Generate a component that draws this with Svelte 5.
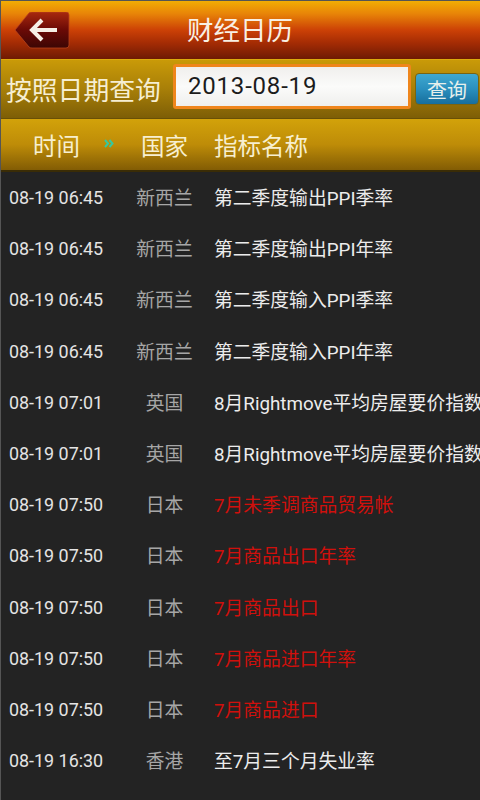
<script lang="ts">
  const rows = [
    { time: '08-19 06:45', country: '新西兰', name: '第二季度输出PPI季率' },
    { time: '08-19 06:45', country: '新西兰', name: '第二季度输出PPI年率' },
    { time: '08-19 06:45', country: '新西兰', name: '第二季度输入PPI季率' },
    { time: '08-19 06:45', country: '新西兰', name: '第二季度输入PPI年率' },
    { time: '08-19 07:01', country: '英国', name: '8月Rightmove平均房屋要价指数' },
    { time: '08-19 07:01', country: '英国', name: '8月Rightmove平均房屋要价指数' },
    { time: '08-19 07:50', country: '日本', name: '7月未季调商品贸易帐', hot: true },
    { time: '08-19 07:50', country: '日本', name: '7月商品出口年率', hot: true },
    { time: '08-19 07:50', country: '日本', name: '7月商品出口', hot: true },
    { time: '08-19 07:50', country: '日本', name: '7月商品进口年率', hot: true },
    { time: '08-19 07:50', country: '日本', name: '7月商品进口', hot: true },
    { time: '08-19 16:30', country: '香港', name: '至7月三个月失业率' }
  ];
</script>

<div class="page">
  <header class="titlebar">
    <button class="back" aria-label="返回">
      <svg width="56" height="37" viewBox="0 0 56 37">
        <defs>
          <linearGradient id="backfill" x1="0" y1="0" x2="0" y2="1">
            <stop offset="0" stop-color="#a8280e" />
            <stop offset="0.5" stop-color="#6a0a06" />
            <stop offset="1" stop-color="#3c0604" />
          </linearGradient>
        </defs>
        <path d="M1 18 L15 1 Q16 0 18 0 L52 0 Q55 0 55 3 L55 33 Q55 36 52 36 L18 36 Q16 36 15 35 Z" fill="url(#backfill)" stroke="#b8431c" stroke-width="0.8" />
        <path d="M43 18 H20 M28 8 L18 18 L28 28" fill="none" stroke="#f6f0e6" stroke-width="4" />
      </svg>
    </button>
    <h1>财经日历</h1>
  </header>

  <div class="search">
    <span class="searchlabel">按照日期查询</span>
    <div class="dateinput">2013-08-19</div>
    <button class="query">查询</button>
  </div>

  <div class="columns">
    <span class="coltime">时间</span>
    <span class="arrows">
      <svg width="10" height="9" viewBox="0 0 10 9">
        <path d="M1 1 L4 4.5 L1 8 M5.5 1 L8.5 4.5 L5.5 8" fill="none" stroke="#34c9a0" stroke-width="2" />
      </svg>
    </span>
    <span class="colcountry">国家</span>
    <span class="colname">指标名称</span>
  </div>

  <div class="list">
    {#each rows as row}
      <div class="row">
        <span class="time">{row.time}</span>
        <span class="country">{row.country}</span>
        <span class="name" class:hot={row.hot}>{row.name}</span>
      </div>
    {/each}
  </div>
</div>

<style>
  :global(body) {
    background: #232323;
  }
  .page {
    width: 480px;
    height: 800px;
    overflow: hidden;
    background: #232323;
    font-family: Roboto, "Noto Sans CJK SC", sans-serif;
    box-sizing: border-box;
    border-left: 1px solid #555;
  }
  .titlebar {
    height: 59px;
    margin-left: -1px;
    display: flex;
    align-items: center;
    position: relative;
    border-top: 1px solid #555;
    box-sizing: border-box;
    background: linear-gradient(#f2ad04 0%, #e88408 22%, #cc4106 50%, #a52c04 72%, #6e1a04 100%);
  }
  .back {
    width: 56px;
    height: 37px;
    margin: 0 0 0 14px;
    padding: 0;
    border: 0;
    background: none;
    display: flex;
  }
  .titlebar h1 {
    position: absolute;
    left: 0;
    right: 0;
    top: 12px;
    margin: 0;
    text-align: center;
    font-size: 26.5px;
    line-height: 36px;
    font-weight: 400;
    color: #f8f0e4;
  }
  .search {
    height: 60px;
    margin-left: -1px;
    display: flex;
    align-items: center;
    box-sizing: border-box;
    padding-left: 6px;
    background: linear-gradient(#c99a08 0%, #a87f08 50%, #7d5e06 100%);
    border-top: 1px solid #dca90c;
    border-bottom: 1px solid #6a5006;
  }
  .searchlabel {
    width: 167px;
    margin-top: -1px;
    font-size: 25.8px;
    color: #f6eed2;
    white-space: nowrap;
  }
  .dateinput {
    width: 220px;
    height: 39px;
    margin-top: -5px;
    border: 3px solid #ef861c;
    border-radius: 3px;
    padding-left: 12px;
    background: linear-gradient(#f0efed 0%, #fbfbfa 50%, #efefed 100%);
    font-size: 24px;
    line-height: 38px;
    letter-spacing: 0.8px;
    color: #1c1c1c;
  }
  .query {
    width: 64px;
    height: 32px;
    margin: 0 0 0 4px;
    padding: 0;
    border: 1px solid #7a6410;
    border-radius: 4px;
    background: linear-gradient(#3fa8d0 0%, #2a8fbe 50%, #176e9c 100%);
    color: #e6f0ec;
    font-family: inherit;
    font-size: 20px;
  }
  .columns {
    height: 53px;
    margin-left: -1px;
    display: flex;
    align-items: center;
    box-sizing: border-box;
    background: linear-gradient(#d2a20a 0%, #be8c08 50%, #825c04 100%);
    border-bottom: 2px solid #3a2c06;
    color: #f7efd0;
    font-size: 23.5px;
    white-space: nowrap;
  }
  .coltime {
    margin-left: 33px;
    width: 71px;
  }
  .arrows {
    width: 37px;
    display: flex;
    margin-top: -2px;
  }
  .colcountry {
    width: 73px;
  }
  .list {
    display: flex;
    flex-direction: column;
    margin-top: -1px;
  }
  .row {
    flex: none;
    height: 51.2px;
    display: flex;
    align-items: center;
    white-space: nowrap;
  }
  .time {
    flex: none;
    width: 122px;
    padding: 2px 0 0 8px;
    box-sizing: border-box;
    font-size: 17.9px;
    color: #e4e4e4;
  }
  .country {
    flex: none;
    width: 91px;
    padding-right: 8px;
    box-sizing: border-box;
    text-align: center;
    font-size: 18.8px;
    color: #a6a6a6;
  }
  .name {
    flex: none;
    font-size: 18.8px;
    color: #ececec;
  }
  .name.hot {
    color: #d0100c;
  }
</style>
